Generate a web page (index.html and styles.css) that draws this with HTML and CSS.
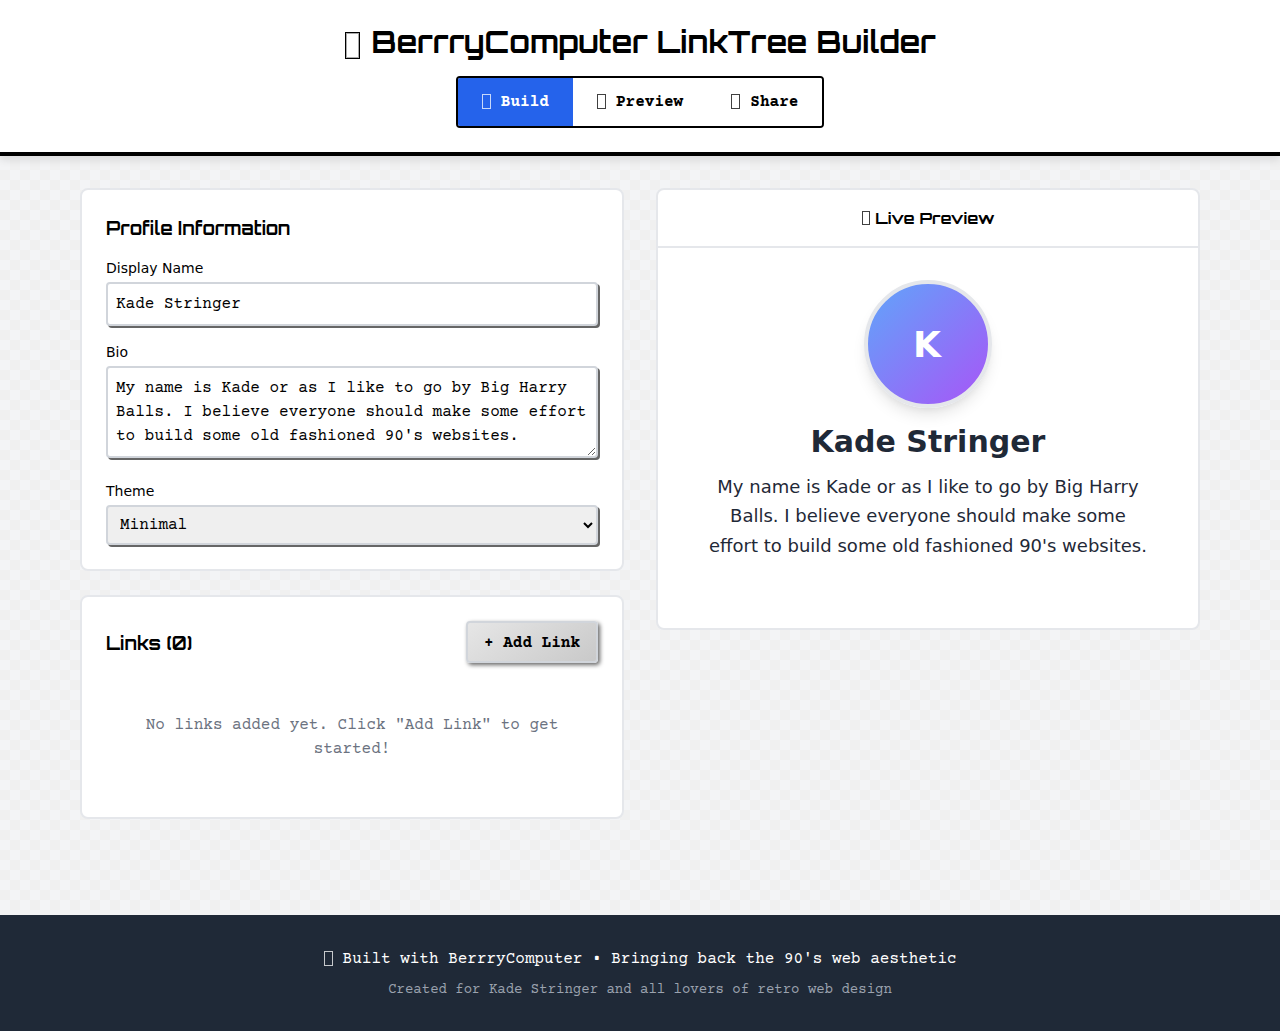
FILE: index.html
```html
<!DOCTYPE html>
<html lang="en">
<head>
<meta charset="utf-8">
<title>BerrryComputer LinkTree Builder</title>
<link rel="stylesheet" href="styles.css">
</head>
<body>
<header class="header">
  <h1 class="title"><span class="tofu tofu-title"></span> BerrryComputer LinkTree Builder</h1>
  <nav class="tabs">
    <button class="tab tab-active"><span class="tofu tofu-mono"></span> Build</button>
    <button class="tab"><span class="tofu tofu-mono"></span> Preview</button>
    <button class="tab"><span class="tofu tofu-mono"></span> Share</button>
  </nav>
</header>
<main class="main">
  <div class="column">
    <section class="card form-card">
      <h2 class="card-title">Profile Information</h2>
      <div class="field">
        <label class="label" for="name">Display Name</label>
        <input class="input" id="name" value="Kade Stringer">
      </div>
      <div class="field">
        <label class="label" for="bio">Bio</label>
        <textarea class="input textarea" id="bio" rows="3">My name is Kade or as I like to go by Big Harry Balls. I believe everyone should make some effort to build some old fashioned 90's websites.</textarea>
      </div>
      <div class="field field-last">
        <label class="label" for="theme">Theme</label>
        <select class="select" id="theme"><option>Minimal</option></select>
      </div>
    </section>
    <section class="card links-card">
      <div class="links-head">
        <h2 class="card-title card-title-flush">Links (0)</h2>
        <button class="add-btn">+ Add Link</button>
      </div>
      <p class="empty">No links added yet. Click "Add Link" to get started!</p>
    </section>
  </div>
  <section class="card preview-card">
    <h3 class="preview-head"><span><span class="tofu tofu-head"></span> Live Preview</span></h3>
    <div class="preview-body">
      <div class="avatar">K</div>
      <h2 class="preview-name">Kade Stringer</h2>
      <p class="preview-bio">My name is Kade or as I like to go by Big Harry Balls. I believe everyone should make some effort to build some old fashioned 90's websites.</p>
    </div>
  </section>
</main>
<footer class="footer">
  <p class="footer-main"><span class="tofu tofu-mono"></span> Built with BerrryComputer • Bringing back the 90's web aesthetic</p>
  <p class="footer-sub">Created for Kade Stringer and all lovers of retro web design</p>
</footer>
</body>
</html>
```
FILE: styles.css
```css
* { box-sizing: border-box; }
html, body { margin: 0; padding: 0; }
body {
  min-height: 1031px;
  display: flex;
  flex-direction: column;
  font-family: "DejaVu Sans", sans-serif;
  color: #000;
  background-color: #f3f4f6;
  background-image:
    linear-gradient(45deg, #f0f0f0 25%, transparent 25%),
    linear-gradient(-45deg, #f0f0f0 25%, transparent 25%),
    linear-gradient(45deg, transparent 75%, #f0f0f0 75%),
    linear-gradient(-45deg, transparent 75%, #f0f0f0 75%);
  background-size: 20px 20px;
  background-position: 0 0, 0 10px, 10px -10px, -10px 0;
}
.tofu {
  display: inline-block;
  border: 1px solid currentColor;
  vertical-align: middle;
  opacity: .75;
}
.tofu-title { width: 15px; height: 27px; margin: 0 2px 0 1px; position: relative; top: 1px; opacity: 1; box-shadow: inset 0 0 0 1px #aaa; }
.tofu-mono { width: 9px; height: 15px; margin: 0 .3px; position: relative; top: -1px; }
.tofu-head { width: 8px; height: 14px; margin: 0 1px 0 0; position: relative; top: -1px; left: 1px; }
.header {
  height: 156px;
  background: #fff;
  border-bottom: 4px solid #000;
  box-shadow: 0 4px 8px rgba(0,0,0,.1);
  padding-top: 21px;
  display: flex;
  flex-direction: column;
  align-items: center;
}
.title {
  margin: 0 0 13px;
  font-family: Orbitron, "DejaVu Sans", sans-serif;
  font-size: 30px;
  line-height: 42px;
  font-weight: 700;
  text-align: center;
}
.tabs {
  display: flex;
  border: 2px solid #000;
  border-radius: 4px;
  overflow: hidden;
  height: 52px;
  background: #fff;
}
.tab {
  border: 0;
  background: #fff;
  color: #000;
  padding: 0 24px;
  font-family: "Courier Prime", "Liberation Mono", monospace;
  font-size: 16px;
  font-weight: 700;
}
.tab-active { background: #2563eb; color: #fff; }
.main {
  flex: 1;
  width: 100%;
  padding: 32px 80px 0;
  display: grid;
  grid-template-columns: 1fr 1fr;
  gap: 32px;
  align-items: start;
}
.column { display: flex; flex-direction: column; gap: 24px; }
.card {
  background: #fff;
  border: 2px solid #e5e7eb;
  border-radius: 8px;
}
.form-card { padding: 24px; }
.links-card { padding: 24px; height: 224px; }
.card-title {
  margin: 0 0 16px;
  font-family: Orbitron, "DejaVu Sans", sans-serif;
  font-size: 18px;
  line-height: 28px;
  font-weight: 700;
}
.card-title-flush { margin: 2px 0 0; }
.field { margin-bottom: 16px; }
.field-last { margin-bottom: 0; }
.label {
  display: block;
  font-size: 14px;
  line-height: 20px;
  margin-bottom: 4px;
}
.input {
  display: block;
  width: 100%;
  height: 44px;
  padding: 8px;
  border: 2px solid #d1d5db;
  border-radius: 4px;
  background: #fff;
  color: #000;
  font-family: "Courier Prime", "Liberation Mono", monospace;
  font-size: 16px;
  line-height: 24px;
  box-shadow: 2px 2px 0 #666;
  outline: 0;
}
.textarea { height: 92px; resize: vertical; margin-bottom: 23px; overflow: hidden; }
.select {
  display: block;
  width: 100%;
  height: 40px;
  padding: 0 8px;
  border: 2px solid #d1d5db;
  border-radius: 4px;
  background: #efefef;
  color: #000;
  font-family: "Courier Prime", "Liberation Mono", monospace;
  font-size: 16px;
  box-shadow: 2px 2px 0 #666;
}
.links-head {
  display: flex;
  justify-content: space-between;
  align-items: center;
  margin-bottom: 50px;
}
.add-btn {
  height: 42px;
  padding: 1px 16px 0;
  border: 2px solid #d1d5db;
  border-radius: 4px;
  background: linear-gradient(145deg, #e6e6e6, #c9c9c9);
  color: #000;
  font-family: "Courier Prime", "Liberation Mono", monospace;
  font-size: 16px;
  font-weight: 700;
  box-shadow: 2px 2px 4px #666;
}
.empty {
  margin: 0;
  padding: 0 16px;
  text-align: center;
  color: #6b7280;
  font-family: "Courier Prime", "Liberation Mono", monospace;
  font-size: 16px;
  line-height: 24px;
}
.preview-card { height: 442px; }
.preview-head {
  margin: 0;
  height: 58px;
  border-bottom: 2px solid #e5e7eb;
  display: flex;
  align-items: center;
  justify-content: center;
  font-family: Orbitron, "DejaVu Sans", sans-serif;
  font-size: 16px;
  font-weight: 700;
}
.preview-body {
  padding: 32px 48px 0;
  display: flex;
  flex-direction: column;
  align-items: center;
  text-align: center;
}
.avatar {
  width: 128px;
  height: 128px;
  padding-right: 2px;
  border-radius: 50%;
  border: 4px solid #e5e7eb;
  background: linear-gradient(135deg, #60a5fa, #a855f7);
  color: #fff;
  font-size: 36px;
  font-weight: 700;
  display: flex;
  align-items: center;
  justify-content: center;
  box-shadow: 0 10px 15px -3px rgba(0,0,0,.1), 0 4px 6px -2px rgba(0,0,0,.05);
}
.preview-name {
  margin: 16px 0 12px;
  color: #1f2937;
  font-size: 30px;
  line-height: 36px;
  font-weight: 700;
}
.preview-bio {
  margin: 0;
  color: #1f2937;
  font-size: 18px;
  line-height: 29.25px;
}
.footer {
  height: 116px;
  background: #1f2937;
  text-align: center;
  padding-top: 32px;
  font-family: "Courier Prime", "Liberation Mono", monospace;
}
.footer-main { margin: 0 0 9px; color: #fff; font-size: 16px; line-height: 24px; }
.footer-sub { margin: 0; color: #9ca3af; font-size: 14px; line-height: 20px; }
```
